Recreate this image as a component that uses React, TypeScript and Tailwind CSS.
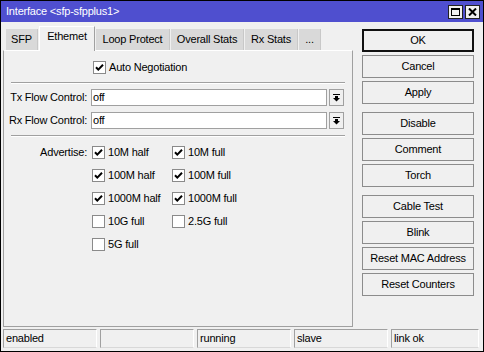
import React from "react";

const Check = ({ checked }: { checked: boolean }) => (
  <div className="w-[13px] h-[13px] bg-white border border-[#8a8a8a] flex items-center justify-center shrink-0">
    {checked && (
      <svg width="11" height="11" viewBox="0 0 11 11">
        <path d="M2 5.2 L4.3 7.6 L9 2.8" fill="none" stroke="#000" strokeWidth="2" />
      </svg>
    )}
  </div>
);

const DropBtn = () => (
  <div className="w-[15px] h-[17px] bg-[#f0f0f0] border border-[#a0a0a0] flex items-center justify-center shrink-0">
    <svg width="7" height="8" viewBox="0 0 7 8">
      <rect x="0" y="0" width="7" height="1" fill="#000" />
      <rect x="2" y="2" width="3" height="2" fill="#000" />
      <polygon points="0,4 7,4 3.5,7.5" fill="#000" />
    </svg>
  </div>
);

const Btn = ({ label, primary }: { label: string; primary?: boolean }) => (
  <div
    className={
      "h-[23px] flex items-center justify-center bg-[#f0f0f0] " +
      (primary ? "border-2 border-[#111]" : "border border-[#8c8c8c]")
    }
  >
    {label}
  </div>
);

const Tab = ({ label, active, w }: { label: string; active?: boolean; w: string }) =>
  active ? (
    <div className={"h-[25px] pb-[5px] flex items-center justify-center bg-[#f0f0f0] border-t border-l border-white border-r border-r-[#a0a0a0] -mb-px relative z-10 " + w}>
      {label}
    </div>
  ) : (
    <div className={"mt-[4px] h-[21px] flex items-center justify-center bg-[#d9d9d9] border-r border-[#c8c8c8] " + w}>{label}</div>
  );

export default function App() {
  const adv: [string, boolean, string | null, boolean][] = [
    ["10M half", true, "10M full", true],
    ["100M half", true, "100M full", true],
    ["1000M half", true, "1000M full", true],
    ["10G full", false, "2.5G full", false],
    ["5G full", false, null, false],
  ];
  return (
    <div
      className="w-[484px] h-[352px] border border-black bg-[#f0f0f0] flex flex-col text-[11px] tracking-[-0.2px] text-black leading-none"
      style={{ fontFamily: '"Liberation Sans", Arial, sans-serif' }}
    >
      {/* Title bar */}
      <div className="h-[21px] bg-[#4f4fcf] flex items-center pl-[5px] pr-[3px] text-white text-[11px]">
        <span className="flex-1">Interface &lt;sfp-sfpplus1&gt;</span>
        <div className="flex gap-[2px] mt-[1px]">
          <div className="w-[15px] h-[14px] bg-[#f0f0f0] border border-[#222] flex items-center justify-center">
            <div className="w-[9px] h-[8px] border border-black border-t-2" />
          </div>
          <div className="w-[15px] h-[14px] bg-[#f0f0f0] border border-[#222] flex items-center justify-center">
            <svg width="9" height="8" viewBox="0 0 9 8">
              <path d="M1 0.5 L8 7.5 M8 0.5 L1 7.5" stroke="#000" strokeWidth="2" />
            </svg>
          </div>
        </div>
      </div>

      {/* Main */}
      <div className="flex flex-1 pl-[2px]">
        <div className="w-[350px] flex flex-col pt-[3px]">
          <div className="flex items-end pl-[3px] h-[25px] gap-[1px]">
            <Tab label="SFP" w="w-[32px]" />
            <Tab label="Ethemet" active w="w-[56px]" />
            <Tab label="Loop Protect" w="w-[74px]" />
            <Tab label="Overall Stats" w="w-[73px]" />
            <Tab label="Rx Stats" w="w-[53px]" />
            <Tab label="..." w="w-[22px]" />
          </div>
          <div className="h-[277px] border-t border-t-white border-l border-l-[#a0a0a0] border-r border-r-[#a0a0a0] border-b border-b-[#a0a0a0] flex flex-col">
            <div className="flex items-center pl-[89px] pt-[10px] gap-[3px] h-[23px]">
              <Check checked />
              <span>Auto Negotiation</span>
            </div>
            <div className="mx-[7px] mt-[8px] h-[2px] border-t border-[#a0a0a0] border-b border-b-white" />
            <div className="flex items-center mt-[5px] h-[17px]">
              <span className="w-[84px] text-right pr-[1px]">Tx Flow Control:</span>
              <div className="ml-[3px] w-[236px] h-[17px] bg-white border border-[#a0a0a0] flex items-center pl-[1px]">off</div>
              <div className="ml-[2px]"><DropBtn /></div>
            </div>
            <div className="flex items-center mt-[6px] h-[17px]">
              <span className="w-[84px] text-right pr-[1px]">Rx Flow Control:</span>
              <div className="ml-[3px] w-[236px] h-[17px] bg-white border border-[#a0a0a0] flex items-center pl-[1px]">off</div>
              <div className="ml-[2px]"><DropBtn /></div>
            </div>
            <div className="mx-[7px] mt-[6px] h-[2px] border-t border-[#a0a0a0] border-b border-b-white" />
            <div className="flex mt-[9px]">
              <span className="w-[84px] text-right pr-[1px] h-[13px] flex items-center justify-end">Advertise:</span>
              <div className="ml-[4px] grid grid-cols-[80px_80px] gap-y-[10px]">
                {adv.map(([a, ac, b, bc], i) => (
                  <React.Fragment key={i}>
                    <div className="flex items-center gap-[3px]">
                      <Check checked={ac} />
                      <span>{a}</span>
                    </div>
                    <div className="flex items-center gap-[3px]">
                      {b && <Check checked={bc} />}
                      {b && <span>{b}</span>}
                    </div>
                  </React.Fragment>
                ))}
              </div>
            </div>
          </div>
        </div>

        <div className="ml-[9px] w-[112px] pt-[7px] flex flex-col gap-[3px]">
          <Btn label="OK" primary />
          <Btn label="Cancel" />
          <Btn label="Apply" />
          <div className="mt-[5px]"><Btn label="Disable" /></div>
          <Btn label="Comment" />
          <Btn label="Torch" />
          <div className="mt-[5px]"><Btn label="Cable Test" /></div>
          <Btn label="Blink" />
          <Btn label="Reset MAC Address" />
          <Btn label="Reset Counters" />
        </div>
      </div>

      {/* Status bar */}
      <div className="flex gap-[3px] pl-[2px] pr-[4px] mb-[3px]">
        {["enabled", "", "running", "slave", "link ok"].map((s, i) => (
          <div
            key={i}
            className={
              "h-[19px] flex items-center pl-[2px] border-t border-l border-[#a0a0a0] border-r border-r-white border-b border-b-[#d8d8d8] " +
              (i === 4 ? "flex-1" : "w-[94px]")
            }
          >
            {s}
          </div>
        ))}
      </div>
    </div>
  );
}
